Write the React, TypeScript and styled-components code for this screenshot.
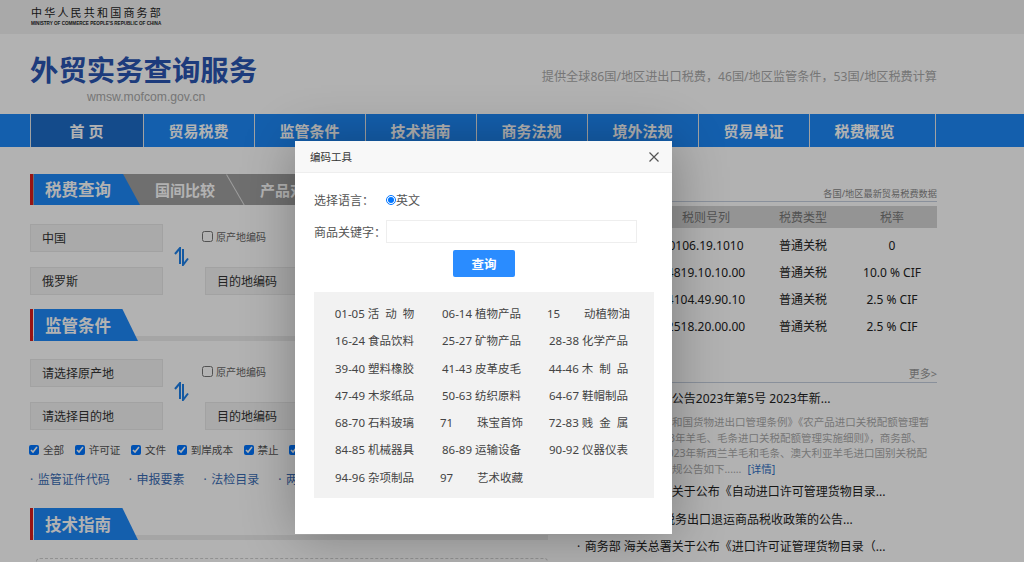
import styled, { createGlobalStyle } from 'styled-components'

const GlobalStyle = createGlobalStyle`
html, body {
  margin: 0;
  padding: 0;
  background: #ffffff;
}
body {
  font-family: "Noto Sans", "Noto Sans CJK SC", "Liberation Sans", sans-serif;
  color: #333333;
}
* { box-sizing: border-box; }
`

const Page = styled.div`
position: relative;
width: 1024px;
height: 562px;
overflow: hidden;
`

const Overlay = styled.div`
position: absolute;
inset: 0;
background: rgba(0, 0, 0, 0.3);
z-index: 5;
`

const TopBar = styled.div`
height: 34px;
padding-left: 31px;
background: #f2f2f2;
`

const MinistryName = styled.div`
padding-top: 6px;
font-size: 11px;
line-height: 14px;
letter-spacing: 2.2px;
color: #222222;
`

const MinistryEnglish = styled.div`
margin-top: 1px;
font-family: "Liberation Sans", sans-serif;
font-size: 4.6px;
font-weight: bold;
line-height: 6px;
color: #222222;
white-space: nowrap;
`

const Header = styled.div`
height: 80px;
padding: 0 87px 0 30px;
display: flex;
justify-content: space-between;
`

const Brand = styled.div`
display: flex;
flex-direction: column;
padding-top: 17px;
`

const BrandTitle = styled.div`
font-size: 28.4px;
font-weight: bold;
line-height: 38px;
color: #2a55b2;
`

const BrandUrl = styled.div`
font-family: "Liberation Sans", sans-serif;
font-size: 12.2px;
line-height: 16px;
padding-left: 57px;
color: #aaaaaa;
`

const Slogan = styled.div`
padding-top: 33px;
font-size: 12.15px;
color: #aaaaaa;
`

const Nav = styled.div`
height: 33px;
background: #1e88f8;
padding-left: 30px;
display: flex;
`

const NavItem = styled.div<{ $active?: boolean; $wide?: boolean }>`
width: ${p => (p.$wide ? '127px' : '111px')};
border-left: 1px solid #e8e8e8;
background: ${p => (p.$active ? '#1e6cc8' : 'transparent')};
color: #ffffff;
font-size: 15px;
font-weight: bold;
line-height: 34px;
text-align: center;
white-space: pre;
padding-right: ${p => (p.$wide ? '16px' : '1px')};
&:first-child { width: 113px; }
&:last-child { border-right: 1px solid #e8e8e8; }
`

const Main = styled.div`
display: flex;
padding: 27px 87px 0 30px;
justify-content: space-between;
`

const LeftColumn = styled.div`
width: 518px;
`

const RightColumn = styled.div`
width: 362px;
padding-top: 13px;
`

const TabBar = styled.div`
height: 31px;
border-left: 3px solid #d81e1e;
background: #9f9f9f;
display: flex;
overflow: hidden;
`

const ActiveTab = styled.div`
width: 106px;
padding-left: 11px;
margin-left: 1px;
background: #1e88f8;
clip-path: polygon(0 0, 84% 0, 100% 100%, 0 100%);
color: #ffffff;
font-size: 16.5px;
font-weight: bold;
line-height: 32px;
`

const GrayTab = styled.div`
position: relative;
width: 105px;
padding-left: 15px;
color: #ffffff;
font-size: 15px;
font-weight: bold;
line-height: 33px;
&::after {
  content: "";
  position: absolute;
  top: -2px;
  right: 9px;
  width: 1px;
  height: 36px;
  background: #e2e2e2;
  transform: rotate(-30deg);
}
`

const SectionHead = styled.div<{ $top: number }>`
margin-top: ${p => p.$top}px;
height: 32px;
border-left: 3px solid #d81e1e;
background: linear-gradient(#ededed, #ededed) left bottom / 100% 5px no-repeat;
`

const SectionTitle = styled.div`
width: 104px;
height: 32px;
margin-left: 1px;
padding-left: 11px;
background: #1e88f8;
clip-path: polygon(0 0, 85% 0, 100% 100%, 0 100%);
color: #ffffff;
font-size: 16.5px;
font-weight: bold;
line-height: 33px;
`

const FormGrid = styled.div<{ $top: number }>`
margin-top: ${p => p.$top}px;
display: grid;
grid-template-columns: 133px 42px 133px;
grid-template-rows: 28px 28px;
row-gap: 15px;
`

const Field = styled.div`
height: 28px;
padding-left: 11px;
background: #f4f4f4;
border: 1px solid #e9e9e9;
font-size: 12px;
line-height: 28px;
color: #333333;
`

const SwapCell = styled.div`
grid-row: 1 / span 2;
grid-column: 2;
display: flex;
align-items: center;
justify-content: center;
padding: 0 6px 6px 0;
`

const CodeCheck = styled.label`
display: flex;
align-items: center;
gap: 3px;
margin-left: -3px;
padding-bottom: 3px;
font-size: 10px;
color: #666666;
input { margin: 0; width: 11px; height: 11px; }
`

const FilterRow = styled.div`
margin-top: 13px;
margin-left: -1px;
display: flex;
gap: 10.5px;
white-space: nowrap;
`

const Filter = styled.label`
display: flex;
align-items: center;
gap: 4px;
font-size: 10.6px;
line-height: 14px;
color: #555555;
input { margin: 0; width: 10px; height: 10px; }
`

const LinkRow = styled.div`
margin-top: 15px;
display: flex;
gap: 19px;
font-size: 12px;
line-height: 16px;
color: #3a6cb4;
white-space: nowrap;
`

const Dot = styled.span`
margin-right: 4.5px;
`

const DashedBox = styled.div`
margin: 18px 0 0 6px;
height: 80px;
border: 1px dashed #d0d0d0;
border-radius: 4px;
`

const SourceNote = styled.div`
height: 15px;
font-size: 9.2px;
line-height: 13px;
text-align: right;
color: #888888;
border-bottom: 1px solid #c4cede;
`

const TableRow = styled.div<{ $head?: boolean }>`
display: grid;
grid-template-columns: 85px 92px 102px 76px;
height: ${p => (p.$head ? '22px' : '27px')};
margin-top: ${p => (p.$head ? '4px' : '0')};
background: ${p => (p.$head ? '#d5d5d5' : 'transparent')};
color: ${p => (p.$head ? '#777777' : '#222222')};
font-size: 12px;
line-height: ${p => (p.$head ? '23px' : '27px')};
text-align: center;
white-space: nowrap;
`

const TableBody = styled.div`
padding-top: 4px;
`

const MoreRow = styled.div`
margin-top: 27px;
height: 16px;
font-size: 11px;
line-height: 14px;
text-align: right;
color: #999999;
border-bottom: 1px solid #c4cede;
`

const NewsTitle = styled.div<{ $first?: boolean }>`
margin-top: ${p => (p.$first ? '6px' : '0')};
height: ${p => (p.$first ? '20px' : '27.4px')};
padding-left: 2px;
font-size: 12px;
line-height: ${p => (p.$first ? '20px' : '27.4px')};
color: #222222;
white-space: nowrap;
`

const NewsText = styled.div`
padding: 6px 0 1px 13px;
font-size: 10.5px;
line-height: 15.6px;
color: #aaaaaa;
white-space: nowrap;
`

const DetailLink = styled.span`
margin-left: 6px;
color: #2f6fc4;
`

const Dialog = styled.div`
position: absolute;
left: 295px;
top: 141px;
width: 377px;
height: 393px;
z-index: 6;
background: #ffffff;
box-shadow: 1px 1px 50px rgba(0, 0, 0, 0.3);
`

const DialogHead = styled.div`
height: 32px;
padding: 0 13px 0 15px;
display: flex;
align-items: center;
justify-content: space-between;
background: #f8f8f8;
border-bottom: 1px solid #eeeeee;
font-size: 10.5px;
color: #333333;
`

const DialogBody = styled.div`
padding: 17px 18px 0 19px;
`

const LangRow = styled.div`
height: 20px;
display: flex;
align-items: center;
font-size: 12px;
color: #555555;
`

const FieldLabel = styled.span`
width: 72px;
flex: none;
`

const LangRadio = styled.input`
margin: 0;
width: 10px;
height: 10px;
`

const KeywordRow = styled.div`
margin-top: 10px;
display: flex;
align-items: center;
font-size: 12px;
color: #555555;
`

const KeywordInput = styled.input`
width: 251px;
height: 23px;
padding: 0 6px;
border: 1px solid #eeeeee;
outline: none;
background: #ffffff;
`

const QueryRow = styled.div`
margin-top: 7px;
padding-left: 139px;
`

const QueryButton = styled.button`
width: 62px;
height: 27px;
padding: 0;
border: none;
border-radius: 2px;
background: #2a8cff;
color: #ffffff;
font-family: inherit;
font-size: 12.5px;
font-weight: bold;
`

const ChapterBox = styled.div`
margin-top: 15px;
height: 206px;
padding: 8px 7px 0;
background: #f2f2f2;
display: grid;
grid-template-columns: repeat(3, 107px);
grid-auto-rows: 27.3px;
font-size: 11.5px;
line-height: 27.3px;
color: #444444;
text-align: center;
white-space: pre;
`

const navItems = ['首 页', '贸易税费', '监管条件', '技术指南', '商务法规', '境外法规', '贸易单证']

const tariffRows = [
  ['0106.19.1010', '普通关税', '0'],
  ['4819.10.10.00', '普通关税', '10.0 % CIF'],
  ['4104.49.90.10', '普通关税', '2.5 % CIF'],
  ['2518.20.00.00', '普通关税', '2.5 % CIF'],
]

const filters = ['全部', '许可证', '文件', '到岸成本', '禁止', '限制']
const links = ['监管证件代码', '申报要素', '法检目录', '两步申报']

const chapters = [
  '01-05 活  动  物', '06-14 植物产品', '15        动植物油',
  '16-24 食品饮料', '25-27 矿物产品', '28-38 化学产品',
  '39-40 塑料橡胶', '41-43 皮革皮毛', '44-46 木  制  品',
  '47-49 木浆纸品', '50-63 纺织原料', '64-67 鞋帽制品',
  '68-70 石料玻璃', '71        珠宝首饰', '72-83 贱  金  属',
  '84-85 机械器具', '86-89 运输设备', '90-92 仪器仪表',
  '94-96 杂项制品', '97        艺术收藏',
]

function SwapIcon() {
  return (
    <svg width="15" height="19" viewBox="0 0 15 19" fill="none" stroke="#1e80e8" strokeWidth="2">
      <path d="M1 7 L6 1 V17" />
      <path d="M9 2 V18 L14 11.5" />
    </svg>
  )
}

function CloseIcon() {
  return (
    <svg width="10" height="10" viewBox="0 0 10 10" stroke="#555555" strokeWidth="1.2">
      <path d="M0.5 0.5 L9.5 9.5 M9.5 0.5 L0.5 9.5" />
    </svg>
  )
}

function App() {
  return (
    <Page>
      <GlobalStyle />
      <TopBar>
        <MinistryName>中华人民共和国商务部</MinistryName>
        <MinistryEnglish>MINISTRY OF COMMERCE PEOPLE'S REPUBLIC OF CHINA</MinistryEnglish>
      </TopBar>
      <Header>
        <Brand>
          <BrandTitle>外贸实务查询服务</BrandTitle>
          <BrandUrl>wmsw.mofcom.gov.cn</BrandUrl>
        </Brand>
        <Slogan>提供全球86国/地区进出口税费，46国/地区监管条件，53国/地区税费计算</Slogan>
      </Header>
      <Nav>
        {navItems.map((item, i) => (
          <NavItem key={item} $active={i === 0}>{item}</NavItem>
        ))}
        <NavItem $wide>税费概览</NavItem>
      </Nav>
      <Main>
        <LeftColumn>
          <TabBar>
            <ActiveTab>税费查询</ActiveTab>
            <GrayTab>国间比较</GrayTab>
            <GrayTab>产品对比</GrayTab>
          </TabBar>
          <FormGrid $top={19}>
            <Field>中国</Field>
            <SwapCell><SwapIcon /></SwapCell>
            <CodeCheck><input type="checkbox" />原产地编码</CodeCheck>
            <Field>俄罗斯</Field>
            <Field>目的地编码</Field>
          </FormGrid>
          <SectionHead $top={14}><SectionTitle>监管条件</SectionTitle></SectionHead>
          <FormGrid $top={18}>
            <Field>请选择原产地</Field>
            <SwapCell><SwapIcon /></SwapCell>
            <CodeCheck><input type="checkbox" />原产地编码</CodeCheck>
            <Field>请选择目的地</Field>
            <Field>目的地编码</Field>
          </FormGrid>
          <FilterRow>
            {filters.map(item => (
              <Filter key={item}><input type="checkbox" defaultChecked />{item}</Filter>
            ))}
          </FilterRow>
          <LinkRow>
            {links.map(item => (
              <span key={item}><Dot>·</Dot>{item}</span>
            ))}
          </LinkRow>
          <SectionHead $top={20}><SectionTitle>技术指南</SectionTitle></SectionHead>
          <DashedBox />
        </LeftColumn>
        <RightColumn>
          <SourceNote>各国/地区最新贸易税费数据</SourceNote>
          <TableRow $head>
            <span>商品名称</span>
            <span>税则号列</span>
            <span>税费类型</span>
            <span>税率</span>
          </TableRow>
          <TableBody>
            {tariffRows.map(row => (
              <TableRow key={row[0]}>
                <span />
                <span>{row[0]}</span>
                <span>{row[1]}</span>
                <span>{row[2]}</span>
              </TableRow>
            ))}
          </TableBody>
          <MoreRow>更多&gt;</MoreRow>
          <NewsTitle $first><Dot>·</Dot>商务部 海关总署公告2023年第5号 2023年新...</NewsTitle>
          <NewsText>
            根据《中华人民共和国货物进出口管理条例》《农产品进口关税配额管理暂<br />
            行办法》及《2023年羊毛、毛条进口关税配额管理实施细则》，商务部、<br />
            海关总署公告第2023年新西兰羊毛和毛条、澳大利亚羊毛进口国别关税配<br />
            额管理有关法律法规公告如下......<DetailLink>[详情]</DetailLink>
          </NewsText>
          <NewsTitle><Dot>·</Dot>商务部 海关总署关于公布《自动进口许可管理货物目录...</NewsTitle>
          <NewsTitle><Dot>·</Dot>财政部 商务部 税务出口退运商品税收政策的公告...</NewsTitle>
          <NewsTitle><Dot>·</Dot>商务部 海关总署关于公布《进口许可证管理货物目录（...</NewsTitle>
        </RightColumn>
      </Main>
      <Overlay />
      <Dialog>
        <DialogHead>
          编码工具
          <CloseIcon />
        </DialogHead>
        <DialogBody>
          <LangRow>
            <FieldLabel>选择语言：</FieldLabel>
            <LangRadio type="radio" name="lang" defaultChecked />
            英文
          </LangRow>
          <KeywordRow>
            <FieldLabel>商品关键字：</FieldLabel>
            <KeywordInput type="text" />
          </KeywordRow>
          <QueryRow><QueryButton>查询</QueryButton></QueryRow>
          <ChapterBox>
            {chapters.map(item => (
              <span key={item}>{item}</span>
            ))}
          </ChapterBox>
        </DialogBody>
      </Dialog>
    </Page>
  )
}

export default App
